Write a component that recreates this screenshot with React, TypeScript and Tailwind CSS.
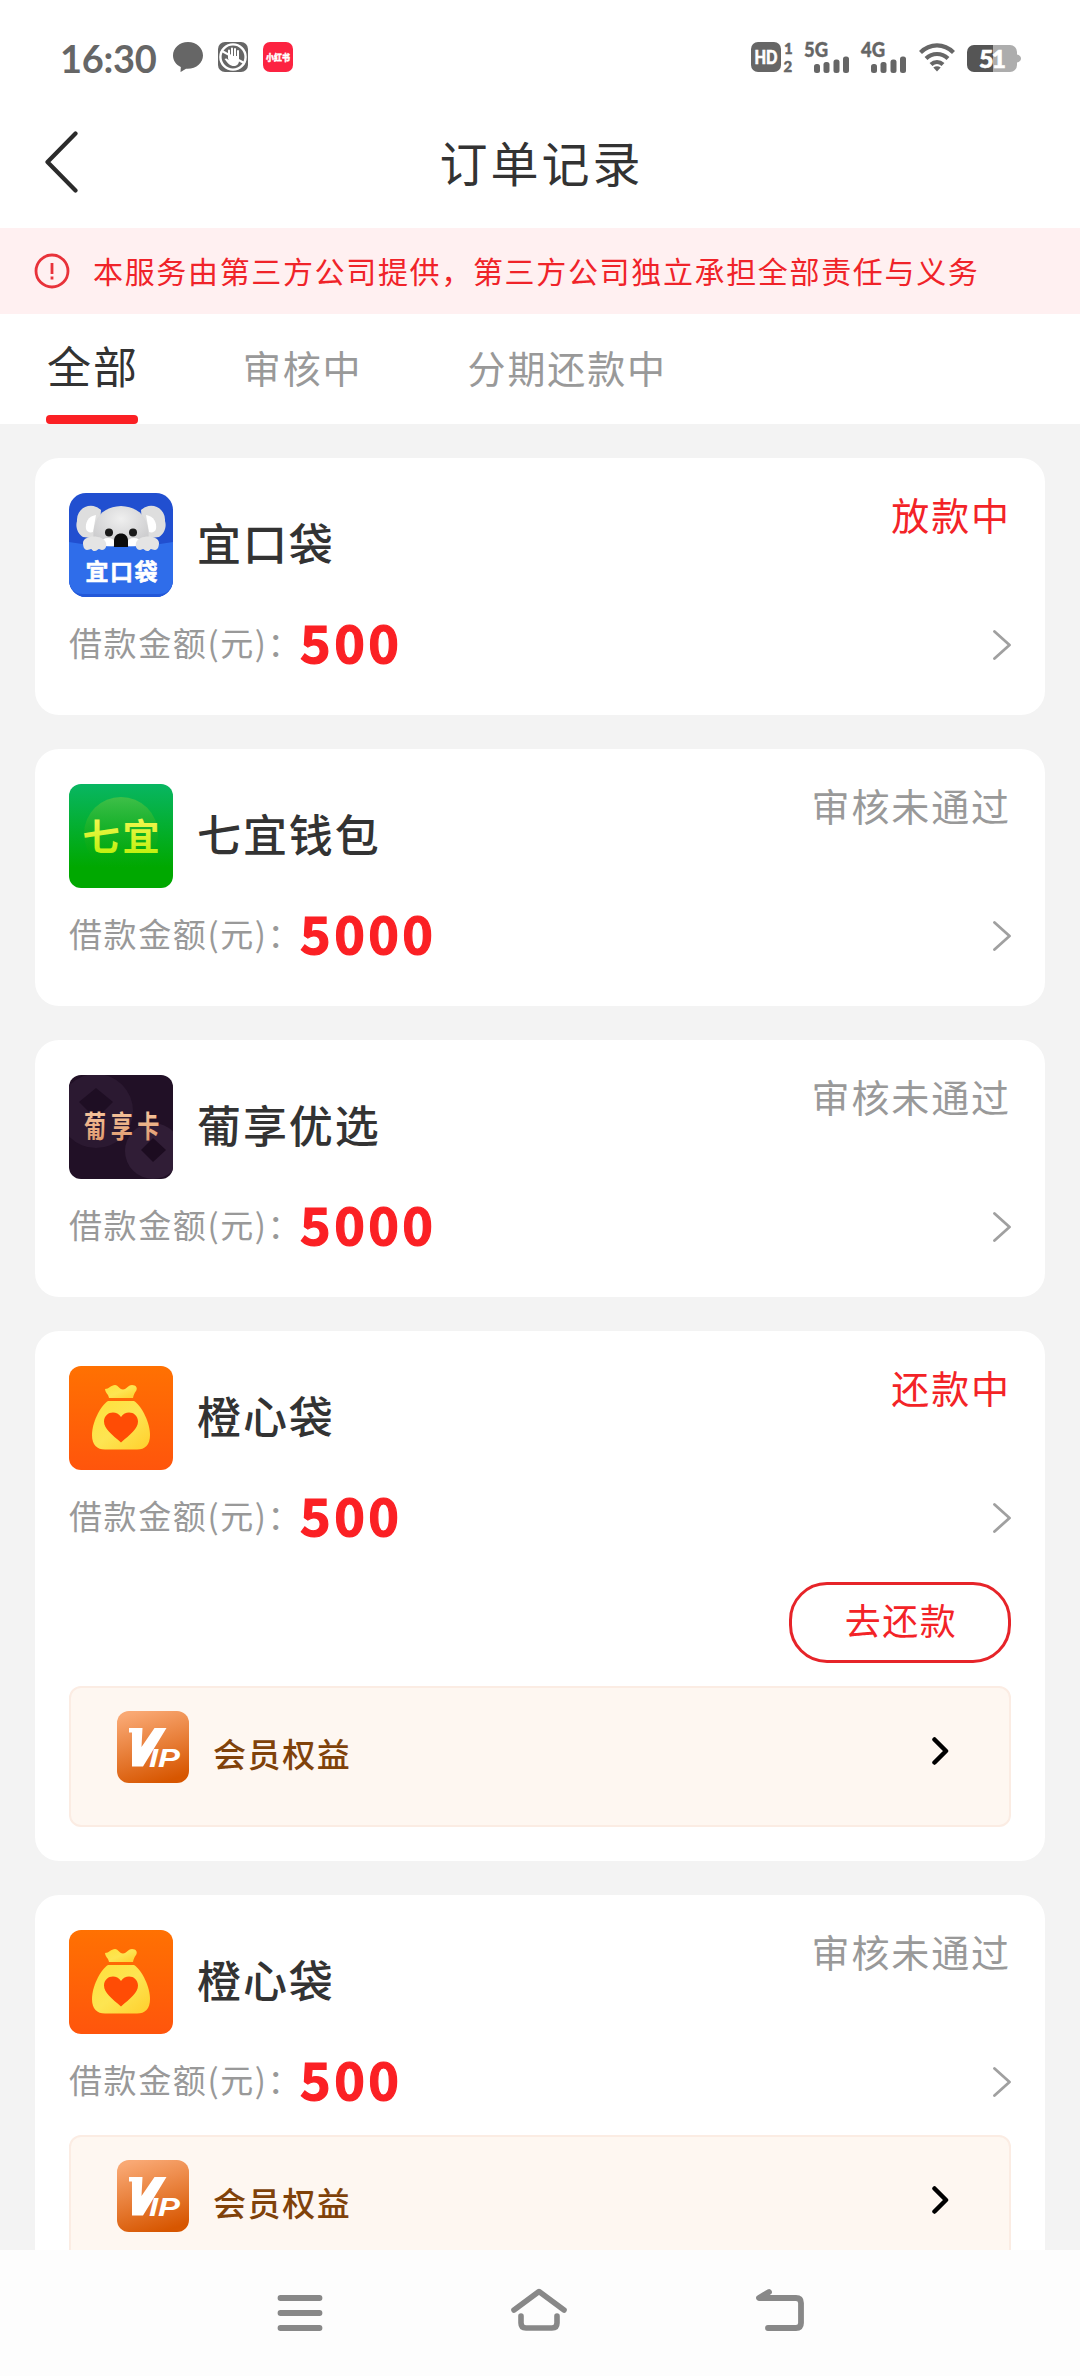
import type { ReactNode } from 'react';

type Logo = 'koala' | 'qiyi' | 'grape' | 'orange';

interface Order {
    id: number;
    logo: Logo;
    name: string;
    status: string;
    active: boolean;
    amount: number;
    canRepay?: boolean;
    hasVip?: boolean;
}

const ORDERS: Order[] = [
    { id: 1, logo: 'koala', name: '宜口袋', status: '放款中', active: true, amount: 500 },
    { id: 2, logo: 'qiyi', name: '七宜钱包', status: '审核未通过', active: false, amount: 5000 },
    { id: 3, logo: 'grape', name: '葡享优选', status: '审核未通过', active: false, amount: 5000 },
    { id: 4, logo: 'orange', name: '橙心袋', status: '还款中', active: true, amount: 500, canRepay: true, hasVip: true },
    { id: 5, logo: 'orange', name: '橙心袋', status: '审核未通过', active: false, amount: 500, hasVip: true },
];

const TABS = ['全部', '审核中', '分期还款中'];

function SignalBars({ label }: { label: string }) {
    return (
        <svg className="w-[46px] h-[32px] overflow-visible" viewBox="0 0 46 32" fill="#666">
            <text x="-1" y="16" fontSize="20.500" fontWeight="900" fontFamily="Lato" stroke="#666" strokeWidth=".4" textLength="24" lengthAdjust="spacingAndGlyphs">{label}</text>
            <rect x="9" y="23" width="6" height="9" rx="2.5" />
            <rect x="18.5" y="21" width="6" height="11" rx="2.5" />
            <rect x="28.5" y="18.5" width="6" height="13.5" rx="2.5" />
            <rect x="38" y="15.5" width="6" height="16.5" rx="2.5" />
        </svg>
    );
}

function StatusBar() {
    return (
        <div className="h-[114px] shrink-0 flex items-center pl-[60px] pr-[59px] text-[#666]">
            <span className="w-[113px] text-[38px] leading-none font-bold tracking-[-0.300px] mt-[2px] font-['Lato',sans-serif]">16:30</span>
            <svg className="w-[30px] h-[30px]" viewBox="0 0 30 30" fill="#666">
                <path d="M15 0C6.500 0 0 6 0 13.500c0 5 3 9.200 7.800 11.600L7.500 30c2-.9 4.200-2.300 5.500-3.200C23 27.500 30 21 30 13.500 30 6 23.500 0 15 0z" />
            </svg>
            <svg className="w-[30px] h-[30px] ml-[15px]" viewBox="0 0 30 30" fill="none" stroke="#fff">
                <rect width="30" height="30" rx="7" fill="#666" stroke="none" />
                <circle cx="15" cy="15" r="12.600" strokeWidth="2.400" />
                <path d="M11 16V8.500M14 15V6.500M17 15V7M20 16V9" strokeWidth="2" strokeLinecap="round" />
                <path d="M10 14h11v5c0 3-2.500 5-5 5-4 0-6-2.500-9.500-7 1.500-1 2.500-.5 4 1z" fill="#fff" stroke="none" />
                <path d="M3 8.500l24 13" strokeWidth="2" />
            </svg>
            <svg className="w-[30px] h-[30px] ml-[15px] overflow-visible" viewBox="0 0 30 30">
                <rect width="30" height="30" rx="7" fill="#fc2341" />
                <text x="3" y="18.600" fontSize="9" fontWeight="900" fill="#fff" stroke="#fff" strokeWidth=".4" textLength="24" lengthAdjust="spacingAndGlyphs">小红书</text>
            </svg>

            <div className="ml-auto flex items-center">
                <svg className="w-[44px] h-[32px] overflow-visible" viewBox="0 0 44 32" fill="#666">
                    <rect y="1" width="30" height="30" rx="7" />
                    <text x="3.500" y="22.500" fontSize="18" fontWeight="900" fontFamily="Lato" fill="#fff" stroke="#fff" strokeWidth=".6" textLength="23" lengthAdjust="spacingAndGlyphs">HD</text>
                    <text x="33" y="12.500" fontSize="15" fontWeight="900" fontFamily="Lato" stroke="#666" strokeWidth=".4">1</text>
                    <text x="32.500" y="31" fontSize="15" fontWeight="900" fontFamily="Lato" stroke="#666" strokeWidth=".4">2</text>
                </svg>
                <div className="ml-[10px]"><SignalBars label="5G" /></div>
                <div className="ml-[11px]"><SignalBars label="4G" /></div>
                <svg className="w-[36px] h-[30px] ml-[11px]" viewBox="0 0 36 30" fill="none" stroke="#666" strokeWidth="4.200">
                    <path d="M1.500 10.500C11 1 25 1 34.500 10.500" />
                    <path d="M7 16.500c6.500-6 15.500-6 22 0" />
                    <path d="M12 22.500c3.500-3.300 8.500-3.300 12 0" />
                    <path d="M14.300 25.500c2.200-1.800 5.200-1.800 7.400 0L18 29.500z" fill="#666" stroke="none" />
                </svg>
                <svg className="w-[54px] h-[27px] ml-[12px] mt-[3px] overflow-visible" viewBox="0 0 54 27">
                    <path d="M26 0h17a7 7 0 0 1 7 7v2.500c2.500.5 4 2 4 4s-1.500 3.500-4 4V20a7 7 0 0 1-7 7H26z" fill="#adadad" />
                    <path d="M7 0h19v27H7a7 7 0 0 1-7-7V7a7 7 0 0 1 7-7z" fill="#555" />
                    <text x="12" y="22.500" fontSize="25" fontWeight="900" fontFamily="Lato" fill="#fff" stroke="#fff" strokeWidth=".6" textLength="27">51</text>
                </svg>
            </div>
        </div>
    );
}

function KoalaLogo() {
    return (
        <svg className="w-[104px] h-[104px]" viewBox="0 0 104 104">
            <defs>
                <clipPath id="koala-clip"><rect width="104" height="104" rx="17" /></clipPath>
                <radialGradient id="koala-fur" cx="50%" cy="30%" r="70%">
                    <stop offset="0" stopColor="#efefef" />
                    <stop offset="1" stopColor="#c8c8ca" />
                </radialGradient>
            </defs>
            <g clipPath="url(#koala-clip)">
                <rect width="104" height="104" fill="#214fd0" />
                <path d="M8 28a14 14 0 0 1 24-11l-2 29-16-2c-5-3-8-10-6-16z" fill="#dedede" />
                <path d="M96 28a14 14 0 0 0-24-11l2 29 16-2c5-3 8-10 6-16z" fill="#dedede" />
                <path d="M27 22c-8 1-11 8-10 14 1 3 4 4 7 3z" fill="#fff" />
                <path d="M77 22c8 1 11 8 10 14-1 3-4 4-7 3z" fill="#fff" />
                <path d="M26 56c-5-22 1-42 26-43 25 1 31 21 26 43z" fill="url(#koala-fur)" />
                <ellipse cx="39" cy="50" rx="7" ry="5" fill="#fff" />
                <ellipse cx="65" cy="50" rx="7" ry="5" fill="#fff" />
                <path d="M0 49q52 9 104 0v55H0z" fill="#2f6dea" />
                <path d="M0 88q2 13 14 13h76q12 0 14-13v16H0z" fill="#2358d8" />
                <circle cx="40" cy="39.500" r="4" fill="#1b1b1b" />
                <circle cx="64" cy="39.500" r="4" fill="#1b1b1b" />
                <path d="M45 54v-6c0-5 3-7.500 7-7.500s7 2.500 7 7.500v6z" fill="#0c0c0c" />
                <path d="M14 50c0-8 20-9 23 0 1 4-1 7-4 7-1.500 0-2-1-3-1s-2 2-4.500 2-2.500-2-3.500-2-2 1-4 1c-3 0-4-4-4-7z" fill="#e4e4e4" />
                <path d="M90 50c0-8-20-9-23 0-1 4 1 7 4 7 1.500 0 2-1 3-1s2 2 4.500 2 2.500-2 3.500-2 2 1 4 1c3 0 4-4 4-7z" fill="#e4e4e4" />
                <text x="16.500" y="86.500" fontSize="23" fontWeight="700" fill="#fff" stroke="#fff" strokeWidth=".6" textLength="72">宜口袋</text>
            </g>
        </svg>
    );
}

function QiyiLogo() {
    return (
        <svg className="w-[104px] h-[104px]" viewBox="0 0 104 104">
            <defs>
                <linearGradient id="qiyi-bg" x1="0" y1="0" x2="0" y2="1">
                    <stop offset="0" stopColor="#08b662" />
                    <stop offset="0.8" stopColor="#00a800" />
                </linearGradient>
                <linearGradient id="qiyi-disc" x1="0" y1="0" x2="0" y2="1">
                    <stop offset="0" stopColor="#3fbf48" />
                    <stop offset="0.7" stopColor="#10ab10" stopOpacity="0.4" />
                    <stop offset="1" stopColor="#00a800" stopOpacity="0" />
                </linearGradient>
                <linearGradient id="qiyi-text" x1="0" y1="0" x2="0" y2="1">
                    <stop offset="0.1" stopColor="#fbf75a" />
                    <stop offset="1" stopColor="#b4f000" />
                </linearGradient>
            </defs>
            <rect width="104" height="104" rx="12" fill="url(#qiyi-bg)" />
            <circle cx="52" cy="50" r="37" fill="url(#qiyi-disc)" />
            <text x="13.500" y="66.500" fontSize="37" fontWeight="700" fill="url(#qiyi-text)" textLength="77">七宜</text>
        </svg>
    );
}

function GrapeLogo() {
    return (
        <svg className="w-[104px] h-[104px]" viewBox="0 0 104 104">
            <defs>
                <clipPath id="grape-clip"><rect width="104" height="104" rx="12" /></clipPath>
                <linearGradient id="grape-text" x1="0" y1="0" x2="0" y2="1">
                    <stop offset="0" stopColor="#fbd0a8" />
                    <stop offset="1" stopColor="#dc9468" />
                </linearGradient>
            </defs>
            <g clipPath="url(#grape-clip)">
                <rect width="104" height="104" fill="#211026" />
                <circle cx="27" cy="36" r="37" fill="#2b1931" />
                <path d="M27 13l17 14-17 17L10 27z" fill="#1e0e23" />
                <circle cx="84" cy="76" r="28" fill="#301d36" />
                <path d="M84 63l13 12-13 12-12-12z" fill="#1c0c20" />
                <g transform="translate(15 62) scale(.92 1.220)">
                    <text fontSize="24" fontWeight="700" fill="url(#grape-text)" textLength="82">葡享卡</text>
                </g>
            </g>
        </svg>
    );
}

function OrangeLogo() {
    return (
        <svg className="w-[104px] h-[104px]" viewBox="0 0 104 104">
            <defs>
                <linearGradient id="orange-bg" x1="0" y1="0" x2="0" y2="1">
                    <stop offset="0" stopColor="#ff7102" />
                    <stop offset="1" stopColor="#ff550c" />
                </linearGradient>
                <linearGradient id="orange-bag" x1="0" y1="0" x2="1" y2="1">
                    <stop offset="0" stopColor="#ffe03a" />
                    <stop offset="0.5" stopColor="#fde552" />
                    <stop offset="1" stopColor="#ffcf2c" />
                </linearGradient>
            </defs>
            <rect width="104" height="104" rx="12" fill="url(#orange-bg)" />
            <path d="M36 23c4 0 6-4 10-4 3.500 0 4 4.500 8 4.500S58.500 19 63 19c4 0 6 3 4 6-1.500 2-2.500 4-3 7H40c-.5-4-3.500-4.500-4-9z" fill="url(#orange-bag)" />
            <path d="M39 35h26c8 5 16 22 16 34 0 10-5 14.500-13 14.500H36c-8 0-13-4.500-13-14.500 0-12 8-29 16-34z" fill="url(#orange-bag)" />
            <path d="M52 76.500C43 68.500 35 63 35 55.500c0-9.500 12-12.500 17-4.500 5-8 17-5 17 4.500 0 7.500-8 13-17 21z" fill="#ff4c05" />
        </svg>
    );
}

const LOGOS: Record<Logo, ReactNode> = {
    koala: <KoalaLogo />,
    qiyi: <QiyiLogo />,
    grape: <GrapeLogo />,
    orange: <OrangeLogo />,
};

function VipIcon({ id }: { id: string }) {
    return (
        <svg className="w-[72px] h-[72px]" viewBox="0 0 72 72">
            <defs>
                <linearGradient id={id} x1="0.3" y1="0" x2="0.6" y2="1">
                    <stop offset="0" stopColor="#f9a873" />
                    <stop offset="1" stopColor="#d75600" />
                </linearGradient>
            </defs>
            <rect width="72" height="72" rx="12" fill={`url(#${id})`} />
            {/* slab V with a small left serif */}
            <path d="M12 17h13.500l-1 19L37.500 17h12L26 55.500H15V21.500h-3z" fill="#fff" />
            <text x="32" y="55.500" fontSize="26" fontWeight="700" fontStyle="italic" fill="#fff" fontFamily="Liberation Sans" textLength="31" lengthAdjust="spacingAndGlyphs">IP</text>
        </svg>
    );
}

function VipEntry({ id }: { id: number }) {
    return (
        <div className="h-[141px] mb-[11px] shrink-0 flex items-start rounded-xl border-2 border-[#fbece3] bg-[#fef7f1] pl-[46px] pr-[60px] pt-[23px]">
            <VipIcon id={`vip-${id}`} />
            <span className="ml-[24px] mt-[18px] text-[33px] leading-[48px] tracking-[1.600px] font-medium text-[#80420a]">会员权益</span>
            <svg className="ml-auto mt-[26px] w-[18px] h-[28px]" viewBox="0 0 18 28" fill="none" stroke="#000" strokeWidth="4.500" strokeLinecap="round" strokeLinejoin="round">
                <path d="M3.500 2.500L15 14 3.500 25.500" />
            </svg>
        </div>
    );
}

function OrderCard({ order }: { order: Order }) {
    return (
        <div className="shrink-0 bg-white rounded-3xl px-[34px] pt-[35px] pb-[23px] flex flex-col">
            <div className="flex items-start h-[104px]">
                {LOGOS[order.logo]}
                <span className="ml-6 leading-[98px] text-[44px] tracking-[1.900px] font-medium text-[#333]">{order.name}</span>
                <span className={`ml-auto leading-[42px] text-[38px] tracking-[1.900px] ${order.active ? 'text-[#f32327]' : 'text-[#999]'}`}>
                    {order.status}
                </span>
            </div>
            <div className="flex items-center h-[95px]">
                <span className="text-[33px] tracking-[1.600px] leading-none text-[#999] mt-[-5px]">借款金额(元)：</span>
                <span className="ml-[-2px] text-[52px] tracking-[3.400px] leading-none font-bold text-[#fb2024] mt-[-8px] [-webkit-text-stroke:1.2px_#fb2024]">{order.amount}</span>
                <svg className="ml-auto w-[18px] h-[30px]" viewBox="0 0 18 30" fill="none" stroke="#a0a0a0" strokeWidth="2.800" strokeLinecap="round" strokeLinejoin="round">
                    <path d="M1.500 1.500L16.500 15 1.500 28.500" />
                </svg>
            </div>
            {order.canRepay && (
                <button className="self-end mt-[17px] mb-[18px] w-[222px] h-[81px] rounded-[38px] border-[3px] border-[#e62429] text-[36px] leading-none tracking-[1.500px] text-[#f32327] pb-[7px] pl-[2px]">
                    去还款
                </button>
            )}
            {order.hasVip && <div className={order.canRepay ? 'mt-[5px]' : 'mt-[6px]'}><VipEntry id={order.id} /></div>}
        </div>
    );
}

export default function App() {
    return (
        <div className="w-[1080px] h-[2376px] flex flex-col overflow-hidden bg-white font-['Noto_Sans_CJK_SC',sans-serif]">
            <StatusBar />

            {/* Header */}
            <div className="h-[114px] shrink-0 grid grid-cols-[1fr_auto_1fr] items-center px-[44px]">
                <svg className="w-[34px] h-[62px] mb-[18px]" viewBox="0 0 34 62" fill="none" stroke="#2b2b2b" strokeWidth="4.200" strokeLinecap="round" strokeLinejoin="round">
                    <path d="M31.500 2.500L3.500 31l28 28.500" />
                </svg>
                <h1 className="text-[48px] tracking-[3px] leading-none text-[#333] mb-[20px] pl-[3px]">订单记录</h1>
            </div>

            {/* Notice */}
            <div className="h-[86px] shrink-0 flex items-center bg-[#fff0f1] pl-[34px] text-[#f02329]">
                <svg className="w-[36px] h-[36px]" viewBox="0 0 36 36" fill="none" stroke="#e8323a" strokeWidth="2.800">
                    <circle cx="18" cy="18" r="16" />
                    <path d="M18 10v11" />
                    <path d="M18 23.500v3" />
                </svg>
                <span className="ml-[23px] mt-[-3px] text-[30px] tracking-[1.660px] leading-none whitespace-nowrap">本服务由第三方公司提供，第三方公司独立承担全部责任与义务</span>
            </div>

            {/* Tabs */}
            <div className="h-[110px] shrink-0 flex pl-[46px] gap-[105px]">
                {TABS.map((tab, i) => (
                    <div
                        key={tab}
                        className={`flex flex-col justify-between ${i === 0 ? 'text-[44px] leading-[103px] tracking-[1.900px] text-[#333]' : 'text-[38px] leading-[105px] tracking-[1.900px] text-[#999]'}`}
                    >
                        <span className={i === 0 ? 'h-[101px] pl-px mr-[-1px]' : 'h-[101px]'}>{tab}</span>
                        {i === 0 && <span className="h-[9px] rounded bg-[#fb2024]" />}
                    </div>
                ))}
            </div>

            {/* Order list */}
            <div className="flex-1 min-h-0 overflow-hidden flex flex-col gap-[34px] bg-[#f3f3f3] px-[35px] pt-[34px]">
                {ORDERS.map((order) => <OrderCard key={order.id} order={order} />)}
            </div>

            {/* System navigation */}
            <div className="h-[126px] shrink-0 flex items-start justify-between bg-[#fdfdfd] pl-[277px] pr-[275px] pt-[37px]">
                <svg className="w-[46px] h-[46px]" viewBox="0 0 46 46" fill="none" stroke="#888" strokeWidth="5.800" strokeLinecap="round">
                    <path d="M3.500 11h39M3.500 26h39M3.500 41h39" />
                </svg>
                <svg className="w-[58px] h-[46px]" viewBox="0 0 58 46" fill="none" stroke="#888" strokeWidth="5.600" strokeLinecap="round" strokeLinejoin="round">
                    <path d="M4 23L29 4.500 54 23" />
                    <path d="M11 29v7q0 5 5 5h26q5 0 5-5v-7" />
                </svg>
                <svg className="w-[50px] h-[46px]" viewBox="0 0 50 46" fill="none" stroke="#888" strokeWidth="5.800" strokeLinecap="round" strokeLinejoin="round">
                    <path d="M14 5L4 11h37q5 0 5 5v20q0 5-5 5H13" />
                </svg>
            </div>
        </div>
    );
}
